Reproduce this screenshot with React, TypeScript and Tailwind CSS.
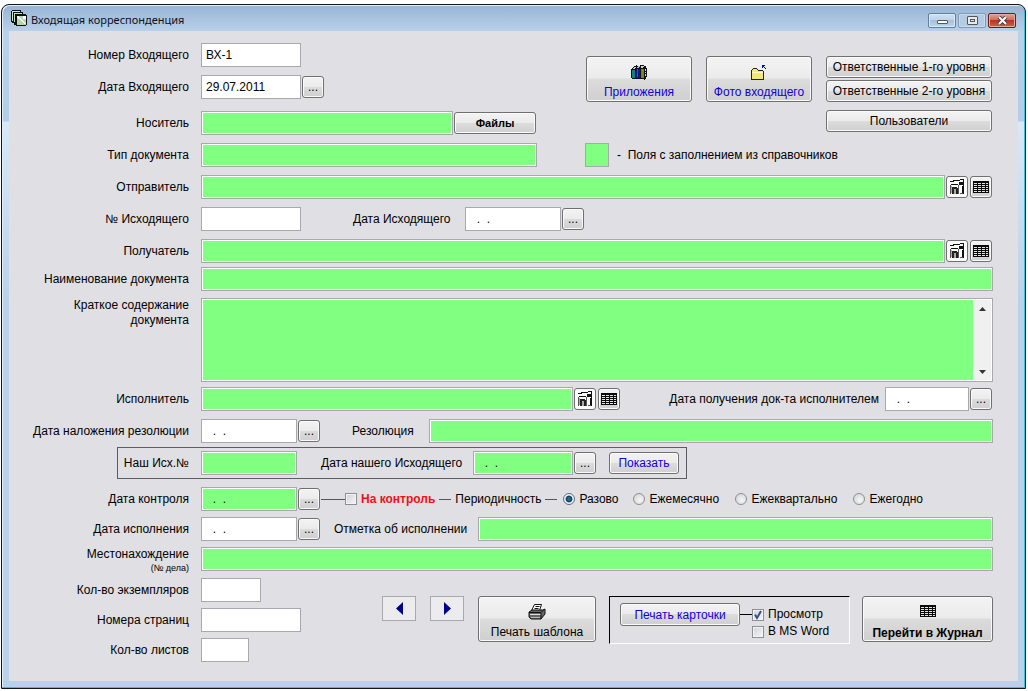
import { useState } from 'react';
import type { ReactNode } from 'react';

const EMPTY_DATE = '  .  .';

const PERIODS = ['Разово', 'Ежемесячно', 'Ежеквартально', 'Ежегодно'];

const BUTTON =
  'flex items-center justify-center rounded-[3px] border border-[#707070] bg-linear-[to_bottom,#f3f3f3_0%,#ebebeb_48%,#dcdcdc_50%,#cfcfcf_100%] shadow-[inset_0_0_0_1px_#fafafa]';
const TICK =
  'size-3 shrink-0 appearance-none border border-[#8e8f8f] bg-linear-to-br from-[#cfd3d9] to-[#f6f6f6] shadow-[inset_0_0_0_1px_#f4f4f4]';

interface FieldProps {
  id: string;
  value?: string;
  green?: boolean;
  className?: string;
}

function Field({ id, value = '', green = false, className = '' }: FieldProps) {
  return (
    <input
      id={id}
      type="text"
      defaultValue={value}
      className={`h-6 min-w-0 border border-[#a9a7b0] px-1 outline-none shadow-[inset_0_0_0_1px_#fff] ${
        green ? 'bg-[#80ff80]' : 'bg-white'
      } ${className}`}
    />
  );
}

function Row({ id, label, className = '', children }: { id: string; label: string; className?: string; children: ReactNode }) {
  return (
    <div className={`flex items-center ${className}`}>
      <label htmlFor={id} className="w-48 shrink-0 pr-3 text-right whitespace-nowrap">
        {label}
      </label>
      {children}
    </div>
  );
}

function DotsButton({ label }: { label: string }) {
  return (
    <button type="button" aria-label={label} className={`${BUTTON} ml-px size-[22px] shrink-0`}>
      ...
    </button>
  );
}

function LookupButtons() {
  return (
    <div className="mr-px ml-px flex shrink-0 gap-0.5">
      <button type="button" aria-label="Карточка" className="flex size-[22px] items-center justify-center rounded-[3px] border border-[#707070] bg-[#fafafa]">
        <CardIcon />
      </button>
      <button type="button" aria-label="Список" className={`${BUTTON} size-[22px]`}>
        <TableIcon />
      </button>
    </div>
  );
}

function TableIcon() {
  return (
    <svg width="16" height="12" viewBox="0 0 16 12" shapeRendering="crispEdges" className="shrink-0">
      <rect width="16" height="12" fill="#0a0a0a" />
      {[2, 4, 6, 8, 10].map((y) => (
        <path key={y} d={`M1 ${y}h3v1h-3zM5 ${y}h3v1h-3zM9 ${y}h3v1h-3zM13 ${y}h2v1h-2z`} fill="#e4e4e4" />
      ))}
    </svg>
  );
}

function CardIcon() {
  return (
    <svg width="16" height="16" viewBox="0 0 16 16" shapeRendering="crispEdges" className="shrink-0">
      <path d="M1 2h4v1H1zM4 1h7v1H4zM11 0h4v1h-4zM14 0h1v15h-1zM10 3h4v3h-4zM13 7h2v8h-2zM2 5h7v1H2z" fill="#111" />
      <path d="M9 6h1v9H9zM1 6h1v9H1zM11 14h3v1h-3z" fill="#555" />
      <path d="M3 8h3v2H5v5H3zM6 8h2v1h1v6H7v-5H6z" fill="#222" />
      <path d="M5 10h2v5H5zM2 7h1v7H2z" fill="#aaa" />
    </svg>
  );
}

function BooksIcon() {
  return (
    <svg width="16" height="15" viewBox="0 0 16 15" shapeRendering="crispEdges">
      <path d="M1 3h1V2h1V1h2V0h1v1h3V0h4v1h2v2h1v9h-1v2h-1v1h-1v-1H1v-1H0V4h1z" fill="#111" />
      <path d="M1 5h3v8H1z" fill="#138080" />
      <path d="M3 2h2v1H3zM2 3h2v1H2z" fill="#c2cccc" />
      <path d="M5 4h4v9H5z" fill="#0c1a86" />
      <path d="M7 1h2v1H7zM6 2h2v1H6z" fill="#b4bce0" />
      <path d="M6 4h1v8H6z" fill="#3a55b8" />
      <path d="M10 4h3v9h-3z" fill="#808020" />
      <path d="M10 1h3v1h-3zM10 2h2v1h-2zM14 4h1v2h-1zM14 7h1v1h-1zM14 9h1v2h-1z" fill="#d4d4d4" />
    </svg>
  );
}

function FolderIcon() {
  return (
    <svg width="16" height="15" viewBox="0 0 16 15" shapeRendering="crispEdges">
      <path d="M2 3h4v1h1v1h5v1h1v9H0V5h1V4h1z" fill="#222" />
      <path d="M2 4h4v1h1v1h5v8H1V5h1z" fill="#f0ea70" />
      <path d="M1 7h11v1H1z" fill="#fffbc0" />
      <path d="M11 0h3v1h-1v1h1v1h1v1h-1V3h-1V2h-1v1h-1z" fill="#0000d8" />
    </svg>
  );
}

function PrinterIcon() {
  return (
    <svg width="18" height="16" viewBox="0 0 18 16">
      <path d="M6.500 .5h7l-2 6h-8z" fill="#fff" stroke="#111" />
      <path d="M7.500 2.500h4M6.500 4.500h4" stroke="#111" />
      <path d="M1 8l3-2h11l2-1v5l-4 5H3l-2-2z" fill="#666" stroke="#111" />
      <path d="M1 8.500h12l3-3" stroke="#111" fill="none" />
      <path d="M2 10.500h11" stroke="#ddd" />
      <path d="M3 13.500h9" stroke="#bbb" />
      <path d="M13 9v6" stroke="#111" />
    </svg>
  );
}

function AppIcon() {
  return (
    <svg width="16" height="16" viewBox="0 0 16 16" shapeRendering="crispEdges">
      <path d="M1 0h9v2h2v2h3v1h1v10h-1v1H5v-1H3v-2H1v-1H0V1h1z" fill="#111" />
      <path d="M1 1h8v1H2v9H1z" fill="#cfe8cf" />
      <path d="M3 3h8v1H4v8H3z" fill="#bfe0bf" />
      <path d="M6 6h9v9H6z" fill="#b8d4b0" />
      <path d="M6 6h2v1h1v1h1v1h1v1h1v1h1v1h1v1h1v1h-2v-1h-1v-1h-1v-1h-1v-1H9v-1H8V9H7V8H6z" fill="#f2f2f2" />
      <path d="M12 6h3v3h-3z" fill="#fff" />
    </svg>
  );
}

function TitleBar() {
  return (
    <header className="flex h-[26px] items-center pr-0.5 pl-0.5">
      <AppIcon />
      <h1 className="ml-1 flex-1 pt-1 font-['Noto_Sans'] text-[11px] text-[#101020]">Входящая корреспонденция</h1>
      <div className="mt-1 flex gap-0.5">
        <button type="button" aria-label="Свернуть" className="flex h-[15px] w-7 items-center justify-center rounded-[2px] border border-[#5f7d9f] bg-linear-[to_bottom,#cfe0f1_0%,#bed3e9_48%,#a5c0dd_50%,#bcd5ee_100%] shadow-[inset_0_0_0_1px_#dce9f6]">
          <span className="mt-1 h-1 w-[11px] rounded-[1px] border border-[#555] bg-white" />
        </button>
        <button type="button" aria-label="Развернуть" className="flex h-[15px] w-7 items-center justify-center rounded-[2px] border border-[#8099b8] bg-[#b5cbe3] shadow-[inset_0_0_0_1px_#c9dbee]">
          <span className="flex h-[9px] w-[11px] items-center justify-center rounded-[1px] border border-[#555] bg-[#e4eaf0]">
            <span className="h-[3px] w-[5px] border border-[#555]" />
          </span>
        </button>
        <button type="button" aria-label="Закрыть" className="flex h-[15px] w-7 items-center justify-center rounded-[2px] border border-[#6b1d14] bg-linear-[to_bottom,#e0a294_0%,#cf6a58_48%,#b83420_50%,#d0604a_100%] shadow-[inset_0_0_0_1px_#e6aa9e]">
          <svg width="11" height="9" viewBox="0 0 11 9">
            <path d="M2 1l7 7M9 1L2 8" stroke="#4b3b45" strokeWidth="4" />
            <path d="M2 1l7 7M9 1L2 8" stroke="#fff" strokeWidth="2" />
          </svg>
        </button>
      </div>
    </header>
  );
}

function Check({ label, checked, onChange }: { label: string; checked: boolean; onChange: (v: boolean) => void }) {
  return (
    <label className="flex items-center gap-1">
      <span className="relative flex">
        <input type="checkbox" checked={checked} onChange={(e) => onChange(e.target.checked)} className={TICK} />
        {checked && (
          <svg width="12" height="12" viewBox="0 0 12 12" className="pointer-events-none absolute inset-0">
            <path d="M3 5.500l2 3.500 4-7" fill="none" stroke="#3b4f8c" strokeWidth="2" />
          </svg>
        )}
      </span>
      {label}
    </label>
  );
}

export default function App() {
  const [onControl, setOnControl] = useState(false);
  const [period, setPeriod] = useState(PERIODS[0]);
  const [preview, setPreview] = useState(true);
  const [msWord, setMsWord] = useState(false);

  return (
    <div className="bg-white pt-1 pr-0.5 pb-0.5 pl-px">
      <div className="rounded-t-lg border border-[#10161c] bg-linear-[to_bottom,#98b4d3_0px,#b9d1ea_27px,#b4cde8_116px,#dae8f6_117px,#b9d1ea_300px] px-[7px] pb-[7px] font-['Liberation_Sans',Arial,sans-serif] text-xs text-black shadow-[inset_-1px_-1px_0_#35c3d6,inset_1px_1px_0_#e2eef8]">
        <TitleBar />
        <main className="bg-[#e0dfe3] pt-3 pr-[25px] pb-[19px]">
          <div className="flex justify-between">
            <div className="flex flex-col gap-2">
              <Row id="number" label="Номер Входящего">
                <Field id="number" value="ВХ-1" className="w-[100px]" />
              </Row>
              <Row id="date" label="Дата Входящего">
                <Field id="date" value="29.07.2011" className="w-[100px]" />
                <DotsButton label="Выбрать дату входящего" />
              </Row>
              <Row id="carrier" label="Носитель" className="mt-1">
                <Field id="carrier" green className="w-[252px]" />
                <button type="button" className={`${BUTTON} ml-px h-[22px] w-[82px] text-[11px] font-bold`}>
                  Файлы
                </button>
              </Row>
            </div>
            <div className="mt-[13px] mr-px flex items-start gap-3.5">
              <button type="button" className={`${BUTTON} h-[46px] w-[106px] flex-col gap-1 pt-1.5 text-[#1400d8]`}>
                <BooksIcon />
                Приложения
              </button>
              <button type="button" className={`${BUTTON} h-[46px] w-[106px] flex-col gap-1 pt-1.5 text-[#1400d8]`}>
                <FolderIcon />
                Фото входящего
              </button>
              <div className="flex w-[166px] flex-col gap-0.5 whitespace-nowrap">
                <button type="button" className={`${BUTTON} h-[22px]`}>Ответственные 1-го уровня</button>
                <button type="button" className={`${BUTTON} h-[22px]`}>Ответственные 2-го уровня</button>
                <button type="button" className={`${BUTTON} mt-1.5 h-[22px]`}>Пользователи</button>
              </div>
            </div>
          </div>

          <div className="mt-2 flex flex-col gap-2">
            <Row id="docType" label="Тип документа">
              <Field id="docType" green className="w-[336px]" />
              <span className="ml-12 size-6 border border-[#a9a7b0] bg-[#80ff80]" />
              <span className="ml-2 whitespace-pre">-  Поля с заполнением из справочников</span>
            </Row>
            <Row id="sender" label="Отправитель">
              <Field id="sender" green className="flex-1" />
              <LookupButtons />
            </Row>
            <Row id="outNumber" label="№ Исходящего">
              <Field id="outNumber" className="w-[100px]" />
              <label htmlFor="outDate" className="ml-13 w-28">Дата Исходящего</label>
              <Field id="outDate" value={EMPTY_DATE} className="w-24" />
              <DotsButton label="Выбрать дату исходящего" />
            </Row>
            <Row id="receiver" label="Получатель">
              <Field id="receiver" green className="flex-1" />
              <LookupButtons />
            </Row>
          </div>

          <Row id="docName" label="Наименование документа" className="mt-1">
            <Field id="docName" green className="flex-1" />
          </Row>

          <div className="mt-[7px] flex">
            <label htmlFor="summary" className="w-48 shrink-0 pr-3 text-right leading-[15px]">
              Краткое содержание
              <br />
              документа
            </label>
            <div className="flex h-[84px] flex-1 border border-[#a9a7b0] bg-white p-px">
              <textarea id="summary" className="flex-1 resize-none bg-[#80ff80] px-1 outline-none" />
              <div className="ml-px flex w-[17px] flex-col justify-between bg-[#f0f0f0]">
                <button type="button" aria-label="Вверх" className="flex h-[17px] items-center justify-center">
                  <svg width="7" height="4" viewBox="0 0 7 4"><path d="M3.500 0L7 4H0z" fill="#333" /></svg>
                </button>
                <button type="button" aria-label="Вниз" className="flex h-[17px] items-center justify-center">
                  <svg width="7" height="4" viewBox="0 0 7 4"><path d="M3.500 4L7 0H0z" fill="#333" /></svg>
                </button>
              </div>
            </div>
          </div>

          <Row id="executor" label="Исполнитель" className="mt-[5px] pr-px">
            <Field id="executor" green className="w-[372px]" />
            <LookupButtons />
            <label htmlFor="gotDate" className="mr-1.5 ml-auto">Дата получения док-та исполнителем</label>
            <Field id="gotDate" value={EMPTY_DATE} className="w-[84px]" />
            <DotsButton label="Выбрать дату получения" />
          </Row>

          <Row id="resolutionDate" label="Дата наложения резолюции" className="mt-2">
            <Field id="resolutionDate" value={EMPTY_DATE} className="w-24" />
            <DotsButton label="Выбрать дату резолюции" />
            <label htmlFor="resolution" className="ml-8 w-[77px]">Резолюция</label>
            <Field id="resolution" green className="flex-1" />
          </Row>

          <div className="mt-1 ml-[108px] flex h-8 w-[570px] items-center border border-[#5c5c64]">
            <label htmlFor="ourNumber" className="w-[83px] pr-3 text-right">Наш Исх.№</label>
            <Field id="ourNumber" green className="w-24" />
            <label htmlFor="ourDate" className="ml-6 w-[152px]">Дата нашего Исходящего</label>
            <Field id="ourDate" value={EMPTY_DATE} green className="w-[100px]" />
            <DotsButton label="Выбрать дату нашего исходящего" />
            <button type="button" className={`${BUTTON} ml-[13px] h-[22px] w-[70px] text-[#1400d8]`}>
              Показать
            </button>
          </div>

          <Row id="controlDate" label="Дата контроля" className="mt-2">
            <Field id="controlDate" value={EMPTY_DATE} green className="w-24" />
            <DotsButton label="Выбрать дату контроля" />
            <span className="ml-px h-px w-6 bg-[#55555c]" />
            <input
              id="onControl"
              type="checkbox"
              checked={onControl}
              onChange={(e) => setOnControl(e.target.checked)}
              className={`${TICK} checked:bg-[#3a5f9a]`}
            />
            <label htmlFor="onControl" className="ml-1 font-bold text-[#f01018]">На контроль</label>
            <span className="ml-1 h-px w-3 bg-[#55555c]" />
            <span className="mx-1">Периодичность</span>
            <span className="h-px w-3 bg-[#55555c]" />
            <div className="ml-1.5 grid grid-cols-[70px_102px_118px_auto]">
              {PERIODS.map((p) => (
                <label key={p} className="flex items-center gap-1">
                  <input
                    type="radio"
                    name="period"
                    checked={period === p}
                    onChange={() => setPeriod(p)}
                    className="size-3 appearance-none rounded-full border border-[#8e8f8f] bg-radial-[at_60%_60%] from-[#f6f6f6] to-[#cccfd3] checked:border-[#5c7080] checked:bg-radial-[at_50%_50%] checked:from-[#1d6f9c] checked:from-15% checked:via-[#123a58] checked:via-40% checked:to-[#eef2f4] checked:to-55%"
                  />
                  {p}
                </label>
              ))}
            </div>
          </Row>

          <Row id="doneDate" label="Дата исполнения" className="mt-1.5">
            <Field id="doneDate" value={EMPTY_DATE} className="w-24" />
            <DotsButton label="Выбрать дату исполнения" />
            <label htmlFor="doneNote" className="ml-3.5 w-36">Отметка об исполнении</label>
            <Field id="doneNote" green className="flex-1" />
          </Row>

          <div className="mt-1.5 flex h-6 items-start">
            <label htmlFor="place" className="w-48 shrink-0 pr-3 text-right leading-[15px]">
              Местонахождение
              <span className="block text-[9px] leading-3">(№ дела)</span>
            </label>
            <Field id="place" green className="flex-1" />
          </div>

          <div className="mt-[7px] flex items-start justify-between">
            <div className="flex flex-col gap-1.5">
              <Row id="copies" label="Кол-во экземпляров">
                <Field id="copies" className="w-[60px]" />
              </Row>
              <Row id="pages" label="Номера страниц">
                <Field id="pages" className="w-[100px]" />
              </Row>
              <Row id="sheets" label="Кол-во листов">
                <Field id="sheets" className="w-12" />
              </Row>
            </div>
            <div className="mt-[18px] flex items-start">
              <button type="button" aria-label="Назад" className="flex h-[25px] w-[34px] items-center justify-center border border-[#a9a9ad] bg-[#ececee]">
                <svg width="7" height="13" viewBox="0 0 7 13"><path d="M7 0v13L0 6.500z" fill="#000090" /></svg>
              </button>
              <button type="button" aria-label="Вперёд" className="ml-3.5 flex h-[25px] w-[34px] items-center justify-center border border-[#a9a9ad] bg-[#ececee]">
                <svg width="7" height="13" viewBox="0 0 7 13"><path d="M0 0v13l7-6.500z" fill="#000090" /></svg>
              </button>
              <button type="button" className={`${BUTTON} ml-3.5 h-[46px] w-[118px] flex-col gap-1 pt-1.5`}>
                <PrinterIcon />
                Печать шаблона
              </button>
              <div className="ml-[13px] flex h-12 w-[241px] items-start border border-t-black border-r-white border-b-white border-l-black pt-1.5 pl-2.5">
                <button type="button" className={`${BUTTON} h-[23px] w-[120px] text-[#1400d8]`}>
                  Печать карточки
                </button>
                <span className="mt-[11px] h-px w-3 bg-black" />
                <div className="mt-1 flex flex-col gap-0.5 leading-[15px]">
                  <Check label="Просмотр" checked={preview} onChange={setPreview} />
                  <Check label="В MS Word" checked={msWord} onChange={setMsWord} />
                </div>
              </div>
              <button type="button" className={`${BUTTON} ml-3 h-[46px] w-[131px] flex-col gap-2 pt-2 font-bold`}>
                <TableIcon />
                Перейти в Журнал
              </button>
            </div>
          </div>
        </main>
      </div>
    </div>
  );
}
